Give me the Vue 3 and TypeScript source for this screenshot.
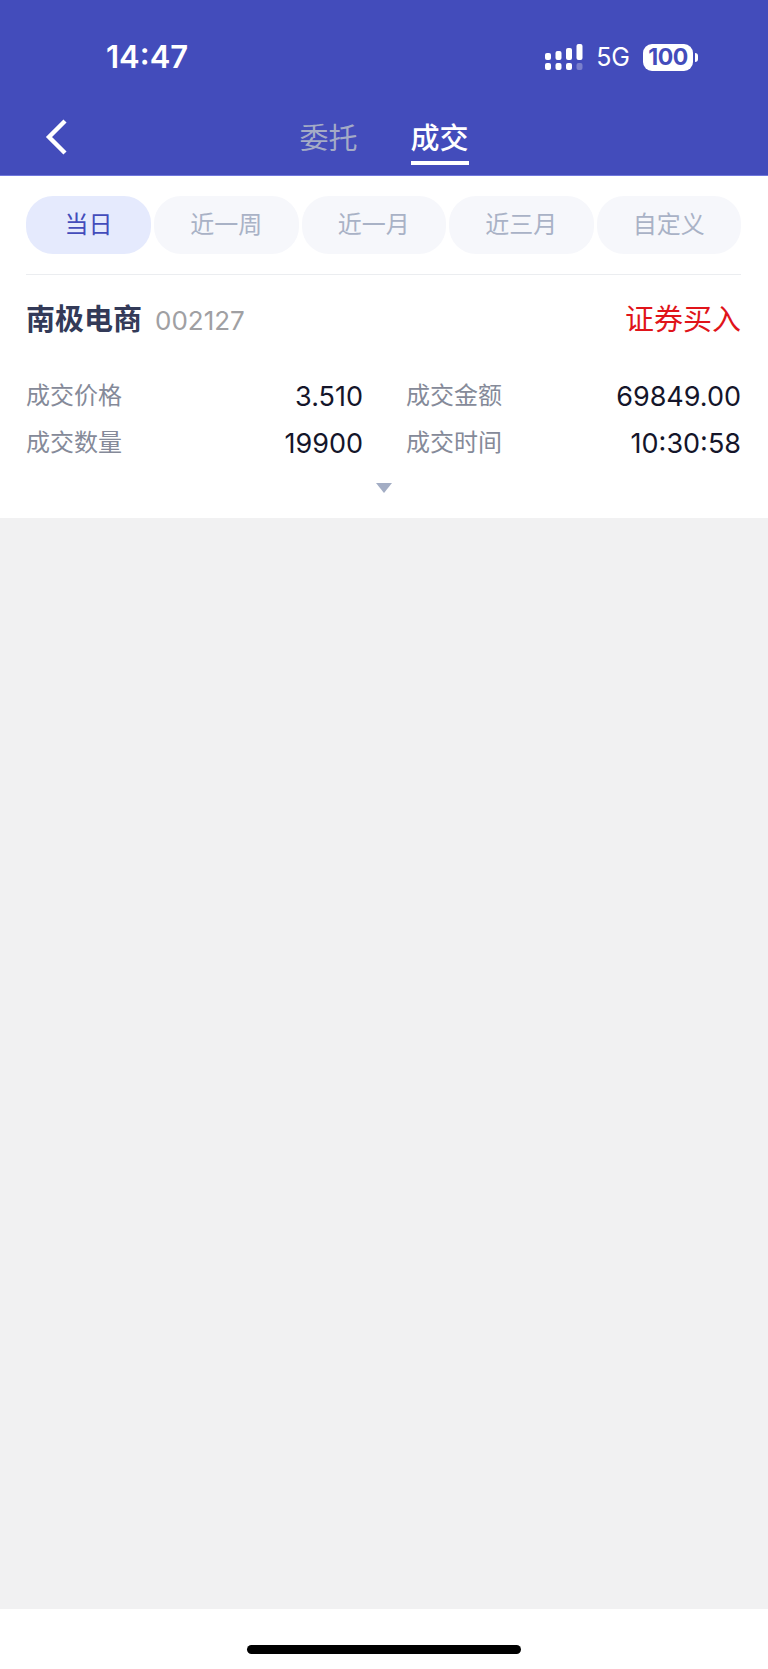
<template>
  <div class="page">
    <header class="header">
      <div class="status-bar">
        <span class="time">14:47</span>
        <div class="status-right">
          <svg class="signal" width="38" height="27" viewBox="0 0 38 27">
            <rect x="0" y="9" width="6" height="7" rx="2" fill="#fff" />
            <rect x="0" y="19" width="6" height="7" rx="2" fill="#fff" />
            <rect x="10.5" y="7" width="6" height="9" rx="2" fill="#fff" />
            <rect x="10.5" y="19" width="6" height="7" rx="2" fill="#fff" />
            <rect x="21" y="4" width="6" height="12" rx="2" fill="#fff" />
            <rect x="21" y="19" width="6" height="7" rx="2" fill="#fff" />
            <rect x="31.5" y="0" width="6" height="16" rx="2" fill="#fff" />
            <rect x="31.5" y="19" width="6" height="7" rx="2" fill="#7b80cc" />
          </svg>
          <span class="net">5G</span>
          <div class="battery">100</div>
        </div>
      </div>
      <nav class="nav">
        <svg class="back" width="24" height="38" viewBox="0 0 24 38">
          <path d="M21 3 L5 19 L21 35" fill="none" stroke="#fff" stroke-width="4.4" />
        </svg>
        <div class="tabs">
          <span
            v-for="tab in tabs"
            :key="tab"
            class="tab"
            :class="{ active: tab === activeTab }"
          >{{ tab }}</span>
        </div>
      </nav>
    </header>

    <section class="panel">
      <div class="filters">
        <span
          v-for="item in filters"
          :key="item"
          class="pill"
          :class="{ current: item === activeFilter }"
        >{{ item }}</span>
      </div>

      <div class="trade">
        <div class="trade-head">
          <div>
            <span class="stock-name">{{ trade.name }}</span>
            <span class="stock-code">{{ trade.code }}</span>
          </div>
          <span class="trade-type">{{ trade.type }}</span>
        </div>
        <div class="trade-grid">
          <div v-for="field in trade.fields" :key="field.label" class="field">
            <span class="field-label">{{ field.label }}</span>
            <span class="field-value">{{ field.value }}</span>
          </div>
        </div>
        <div class="more"><i class="arrow"></i></div>
      </div>
    </section>

    <div class="empty"></div>

    <footer class="home-area">
      <div class="home-bar"></div>
    </footer>
  </div>
</template>

<script setup lang="ts">
const tabs = ["委托", "成交"];
const activeTab = "成交";

const filters = ["当日", "近一周", "近一月", "近三月", "自定义"];
const activeFilter = "当日";

const trade = {
  name: "南极电商",
  code: "002127",
  type: "证券买入",
  fields: [
    { label: "成交价格", value: "3.510" },
    { label: "成交金额", value: "69849.00" },
    { label: "成交数量", value: "19900" },
    { label: "成交时间", value: "10:30:58" },
  ],
};
</script>

<style>
html,
body {
  margin: 0;
  background: #fff;
}
</style>

<style scoped>
.page {
  width: 768px;
  height: 1669px;
  display: flex;
  flex-direction: column;
  font-family: Inter, "Noto Sans CJK SC", sans-serif;
}

.header {
  height: 176px;
  box-sizing: border-box;
  background: #434cbb;
  border-bottom: 1px solid #6f77dc;
}

.status-bar {
  height: 110px;
  box-sizing: border-box;
  padding: 38px 75px 0 106px;
  display: flex;
  justify-content: space-between;
  align-items: flex-start;
}

.time {
  font-size: 31px;
  line-height: 38px;
  font-weight: 600;
  color: #fff;
}

.status-right {
  display: flex;
  align-items: center;
  height: 32px;
  margin-top: 3px;
}

.signal {
  overflow: visible;
  margin-right: 13px;
}

.net {
  font-size: 25px;
  line-height: 32px;
  color: #fff;
  margin-right: 13px;
}

.battery {
  position: relative;
  width: 50px;
  height: 27px;
  border-radius: 9px;
  background: #fff;
  color: #434cbb;
  font-size: 23px;
  font-weight: 700;
  line-height: 27px;
  text-align: center;
  letter-spacing: -0.5px;
}

.battery::after {
  content: "";
  position: absolute;
  left: 52px;
  top: 9px;
  width: 3px;
  height: 9px;
  border-radius: 0 3px 3px 0;
  background: #fff;
}

.nav {
  height: 65px;
  position: relative;
  display: flex;
  justify-content: center;
}

.back {
  position: absolute;
  left: 44px;
  top: 8px;
}

.tabs {
  display: flex;
  gap: 53px;
}

.tab {
  height: 55px;
  box-sizing: border-box;
  padding-top: 8px;
  font-size: 29px;
  line-height: 42px;
  color: #a4abc6;
}

.tab.active {
  color: #fff;
  font-weight: 500;
  border-bottom: 4px solid #fff;
}

.panel {
  background: #fff;
  padding: 20px 27px 0 26px;
}

.filters {
  display: flex;
  gap: 3px;
  padding-bottom: 20px;
  border-bottom: 1px solid #ebedf0;
}

.pill {
  flex: 1 1 0;
  height: 58px;
  border-radius: 27px;
  background: #f6f7fb;
  color: #a9b2c6;
  font-size: 24px;
  line-height: 57px;
  text-align: center;
}

.pill.current {
  flex: 0 0 125px;
  background: #e5eafd;
  color: #434cbb;
}

.trade-head {
  display: flex;
  justify-content: space-between;
  align-items: center;
  height: 50px;
  margin-top: 17px;
}

.stock-name {
  font-size: 29px;
  font-weight: 700;
  color: #333a58;
}

.stock-code {
  margin-left: 13px;
  font-size: 26px;
  color: #a0a0a3;
}

.trade-type {
  font-size: 29px;
  color: #e0141a;
}

.trade-grid {
  display: grid;
  grid-template-columns: 337px 335px;
  column-gap: 43px;
  row-gap: 6px;
  margin-top: 34px;
}

.field {
  display: flex;
  justify-content: space-between;
  align-items: center;
  height: 41px;
}

.field-label {
  font-size: 24px;
  color: #858a99;
  margin-top: -6px;
}

.field-value {
  font-size: 27px;
  color: #14152a;
}

.more {
  display: flex;
  justify-content: center;
  padding: 19px 0 25px;
  margin-right: -1px;
}

.arrow {
  display: block;
  width: 0;
  height: 0;
  border-left: 8px solid transparent;
  border-right: 8px solid transparent;
  border-top: 10px solid #a3adc4;
}

.empty {
  flex: 1;
  background: #f1f1f2;
}

.home-area {
  height: 60px;
  background: #fff;
  display: flex;
  justify-content: center;
  padding-top: 36px;
  box-sizing: border-box;
}

.home-bar {
  width: 274px;
  height: 9px;
  border-radius: 5px;
  background: #000;
}
</style>
